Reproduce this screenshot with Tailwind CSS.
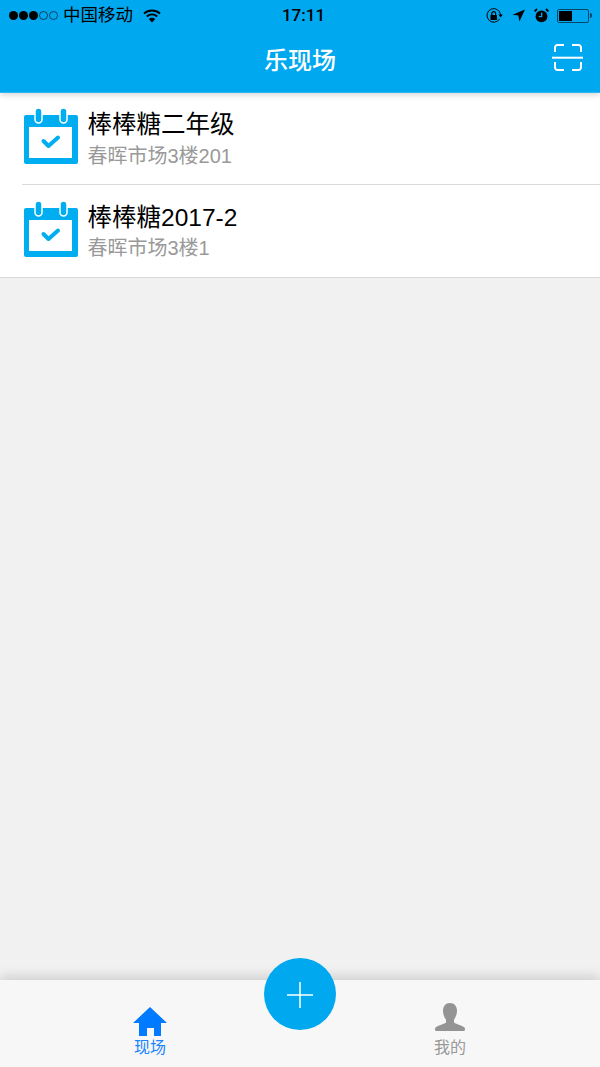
<!DOCTYPE html>
<html lang="zh">
<head>
  <meta charset="UTF-8" />
  <title>乐现场</title>
  <script src="https://cdn.jsdelivr.net/npm/@tailwindcss/browser@4"></script>
</head>
<body class="font-['Liberation_Sans','Noto_Sans_CJK_SC',sans-serif] bg-[#f1f1f1]">
  <div class="relative w-[600px] h-[1067px] overflow-hidden flex flex-col">

    <!-- header -->
    <header class="h-[93px] shrink-0 bg-[#00a8f0] border-b border-[#2ab8f5] flex flex-col shadow-[0_2px_6px_rgba(0,0,0,0.16)] z-10">
      <div class="h-[31px] flex items-center justify-between pl-[9px] pr-[8px] text-black">
        <div class="flex items-center w-[203px]">
          <div class="flex gap-[1px]">
            <span class="w-[9px] h-[9px] rounded-full bg-black"></span>
            <span class="w-[9px] h-[9px] rounded-full bg-black"></span>
            <span class="w-[9px] h-[9px] rounded-full bg-black"></span>
            <span class="w-[9px] h-[9px] rounded-full border border-black/60"></span>
            <span class="w-[9px] h-[9px] rounded-full border border-black/60"></span>
          </div>
          <span class="ml-[5px] text-[17.500px] leading-none">中国移动</span>
          <svg class="ml-[10px]" width="18" height="14" viewBox="0 0 18 14">
            <path d="M1 4.600C5.600.6 12.400.6 17 4.600" fill="none" stroke="#000" stroke-width="2"/>
            <path d="M3.800 7.400C6.900 4.800 11.100 4.800 14.200 7.400" fill="none" stroke="#000" stroke-width="2"/>
            <path d="M9 13.500 5.800 10C7.700 8.400 10.300 8.400 12.200 10Z" fill="#000"/>
          </svg>
        </div>
        <span class="font-['Roboto'] text-[17px] leading-none font-medium">17:11</span>
        <div class="flex items-center justify-end w-[197px]">
          <svg width="17" height="16" viewBox="0 0 17 16">
            <path d="M13.600 11A6.800 6.800 0 1 1 14.600 7" fill="none" stroke="#000" stroke-width="1"/>
            <path d="M12.400 6.600h4.400l-2.200 2.800Z" fill="#000"/>
            <rect x="4.500" y="7" width="6.500" height="5" rx=".6" fill="#000"/>
            <path d="M5.800 7V5.500a1.900 1.900 0 0 1 3.800 0V7" fill="none" stroke="#000" stroke-width="1.200"/>
          </svg>
          <svg class="ml-[9px]" width="13" height="13" viewBox="0 0 13 13">
            <path d="M13 .5 7.400 12.500 6.400 6.600.5 5.800Z" fill="#000"/>
          </svg>
          <svg class="ml-[9px]" width="15" height="15" viewBox="0 0 15 15">
            <circle cx="7.500" cy="8.400" r="5.900" fill="#000"/>
            <path d="M7.700 4.600v4H4.800" fill="none" stroke="#00a8f0" stroke-width="1.300"/>
            <path d="M.6 3.400 3 1M14.400 3.400 12 1" stroke="#000" stroke-width="1.800"/>
          </svg>
          <div class="ml-[8px] w-[32px] h-[14px] rounded-[2px] border border-[#00456a] p-[1px]">
            <div class="w-[13px] h-full bg-black"></div>
          </div>
          <div class="ml-[1px] w-[2px] h-[5px] bg-[#00456a] rounded-r-sm"></div>
        </div>
      </div>
      <div class="relative flex-1 flex items-center justify-center pb-[2px]">
        <h1 class="text-[24px] leading-none text-white font-medium">乐现场</h1>
        <svg class="absolute right-[17px] top-[13px]" width="31" height="28" viewBox="0 0 31 28">
          <path d="M3 8V3.500A2.500 2.500 0 0 1 5.500 1H12M20 1h6.500A2.500 2.500 0 0 1 29 3.500V8M3 18v5.500A2.500 2.500 0 0 0 5.500 26H12M20 26h6.500a2.500 2.500 0 0 0 2.500-2.500V18" fill="none" stroke="#fff" stroke-width="2"/>
          <path d="M0 13.700h31" stroke="#fff" stroke-width="2"/>
        </svg>
      </div>
    </header>

    <!-- list -->
    <ul class="bg-white shrink-0">
      <li class="h-[92px] pl-[24px] flex items-start relative">
        <svg width="54" height="56" viewBox="0 0 54 56" class="shrink-0 mt-[15px]">
          <path d="M2 7h50a2 2 0 0 1 2 2v45a2 2 0 0 1-2 2H2a2 2 0 0 1-2-2V9a2 2 0 0 1 2-2Z" fill="#00adf0"/>
          <rect x="5" y="19" width="43" height="31" fill="#fff"/>
          <rect x="11" y="0" width="7" height="15" rx="3.500" fill="#00adf0" stroke="#fff" stroke-width="1.500"/>
          <rect x="36" y="0" width="7" height="15" rx="3.500" fill="#00adf0" stroke="#fff" stroke-width="1.500"/>
          <path d="M19.500 33l5 5 9.500-8.500" fill="none" stroke="#00adf0" stroke-width="4" stroke-linecap="round" stroke-linejoin="round"/>
        </svg>
        <div class="ml-[9.500px] mt-[16px]">
          <div class="text-[24.500px] leading-[32px] text-black">棒棒糖二年级</div>
          <div class="text-[20px] leading-[26px] mt-[2px] text-[#999]">春晖市场3楼201</div>
        </div>
        <div class="absolute left-[22px] right-0 bottom-0 h-px bg-[#d9d9d9]"></div>
      </li>
      <li class="h-[93px] pl-[24px] flex items-start border-b border-[#d9d9d9]">
        <svg width="54" height="56" viewBox="0 0 54 56" class="shrink-0 mt-[16px]">
          <path d="M2 7h50a2 2 0 0 1 2 2v45a2 2 0 0 1-2 2H2a2 2 0 0 1-2-2V9a2 2 0 0 1 2-2Z" fill="#00adf0"/>
          <rect x="5" y="19" width="43" height="31" fill="#fff"/>
          <rect x="11" y="0" width="7" height="15" rx="3.500" fill="#00adf0" stroke="#fff" stroke-width="1.500"/>
          <rect x="36" y="0" width="7" height="15" rx="3.500" fill="#00adf0" stroke="#fff" stroke-width="1.500"/>
          <path d="M19.500 33l5 5 9.500-8.500" fill="none" stroke="#00adf0" stroke-width="4" stroke-linecap="round" stroke-linejoin="round"/>
        </svg>
        <div class="ml-[9.500px] mt-[17px]">
          <div class="text-[24.500px] leading-[32px] text-black">棒棒糖2017-2</div>
          <div class="text-[20px] leading-[26px] mt-[1px] text-[#999]">春晖市场3楼1</div>
        </div>
      </li>
    </ul>

    <div class="flex-1"></div>

    <!-- tab bar -->
    <nav class="h-[87px] shrink-0 bg-[#f7f7f7] grid grid-cols-2 shadow-[0_-3px_12px_rgba(0,0,0,0.16)] z-10">
      <a class="flex flex-col items-center pt-[27px] text-[#1a85ff]">
        <svg width="34" height="29" viewBox="0 0 34 29">
          <path d="M17 0 34 16H28V29H21V21H14V29H6V16H0Z" fill="#007aff"/>
        </svg>
        <span class="text-[16px] leading-none mt-[4px]">现场</span>
      </a>
      <a class="flex flex-col items-center pt-[23px] text-[#999]">
        <svg width="30" height="28" viewBox="0 0 30 28">
          <path d="M15 0c4.500 0 7 3.500 7 8 0 3.500-1.500 6.500-3 8.500v3c1 1.500 8 2.500 10.500 5 .5.500.5 1.200.5 2 0 .8-.6 1.500-1.500 1.500H1.500C.6 28 0 27.300 0 26.500c0-.8 0-1.500.5-2C3 22 10 21 11 19.500v-3C9.500 14.500 8 11.500 8 8c0-4.500 2.500-8 7-8Z" fill="#949494"/>
        </svg>
        <span class="text-[16px] leading-none mt-[9px]">我的</span>
      </a>
    </nav>

    <!-- add button -->
    <button class="absolute left-[264px] top-[958px] z-20 w-[72px] h-[72px] rounded-full bg-[#00a8f0] flex items-center justify-center">
      <svg width="26" height="26" viewBox="0 0 26 26" class="mt-[1px]">
        <path d="M13 0v26M0 13h26" stroke="#fff" stroke-width="1.500"/>
      </svg>
    </button>
  </div>
</body>
</html>
